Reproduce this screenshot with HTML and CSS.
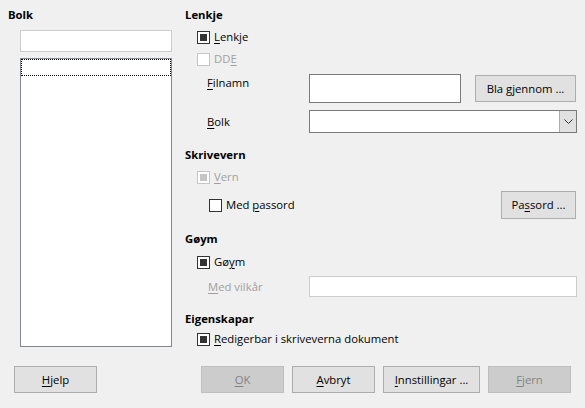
FILE: index.html
```html
<!DOCTYPE html>
<html lang="nn">
<head>
<meta charset="utf-8">
<title>Bolkar</title>
<link rel="stylesheet" href="styles.css">
</head>
<body>
<div class="dialog">
  <div class="main">
    <section class="left">
      <h2 class="heading">Bolk</h2>
      <div class="field field-light name-field"></div>
      <div class="listbox"><div class="focus-row"></div></div>
    </section>
    <section class="right">
      <h2 class="heading">Lenkje</h2>
      <div class="check-row first-row"><span class="cb checked"></span><span class="cb-label"><u>L</u>enkje</span></div>
      <div class="check-row disabled"><span class="cb"></span><span class="cb-label">DD<u>E</u></span></div>
      <div class="form-row file-row">
        <span class="form-label top"><u>F</u>ilnamn</span>
        <div class="field field-dark file-field"></div>
        <div class="btn browse-btn"><span>Bla <u>g</u>jennom ...</span></div>
      </div>
      <div class="form-row bolk-row">
        <span class="form-label"><u>B</u>olk</span>
        <div class="combo">
          <div class="combo-text"></div>
          <div class="combo-btn">
            <svg width="9" height="5" viewBox="0 0 9 5"><polyline points="0.5,0.5 4.5,4.5 8.5,0.5" fill="none" stroke="#333" stroke-width="1"/></svg>
          </div>
        </div>
      </div>

      <h2 class="heading sec-heading">Skrivevern</h2>
      <div class="check-row after-heading disabled"><span class="cb checked"></span><span class="cb-label"><u>V</u>ern</span></div>
      <div class="check-row pass-row">
        <span class="cb"></span><span class="cb-label">Med <u>p</u>assord</span>
        <div class="btn pass-btn"><span>Pa<u>s</u>sord ...</span></div>
      </div>

      <h2 class="heading hide-heading">Gøym</h2>
      <div class="check-row after-heading2"><span class="cb checked"></span><span class="cb-label">Gø<u>y</u>m</span></div>
      <div class="form-row cond-row">
        <span class="form-label disabled-text"><u>M</u>ed vilkår</span>
        <div class="field field-light cond-field"></div>
      </div>

      <h2 class="heading prop-heading">Eigenskapar</h2>
      <div class="check-row last-row"><span class="cb checked"></span><span class="cb-label"><u>R</u>edigerbar i skriveverna dokument</span></div>
    </section>
  </div>
  <div class="buttons">
    <div class="btn w83"><span><u>H</u>jelp</span></div>
    <div class="spacer"></div>
    <div class="btn w83 btn-disabled"><span><u>O</u>K</span></div>
    <div class="btn w83"><span><u>A</u>vbryt</span></div>
    <div class="btn w97"><span><u>I</u>nnstillingar ...</span></div>
    <div class="btn w83 btn-disabled"><span><u>F</u>jern</span></div>
  </div>
</div>
</body>
</html>
```

FILE: styles.css
```css
* { box-sizing: border-box; }
html, body { margin: 0; padding: 0; }
body {
  width: 585px;
  height: 408px;
  background: #f0f0f0;
  font-family: "Open Sans", "Noto Sans", sans-serif;
  font-size: 11.3px;
  line-height: 16px;
  color: #000;
  overflow: hidden;
}
u { text-decoration: underline; text-underline-offset: 2px; }
.dialog { display: flex; flex-direction: column; height: 408px; }
.main { display: flex; gap: 8px; padding: 7px 8px 0 8px; }
.left { width: 169px; display: flex; flex-direction: column; }
.right { width: 392px; display: flex; flex-direction: column; }
.heading { margin: 0; font-size: 11.3px; font-weight: 700; line-height: 16px; height: 16px; }

.field { background: #fff; border: 1px solid #7a7a7a; }
.field-light { border-color: #cccccc; }
.name-field { margin: 7px 0 0 12px; width: 152px; height: 22px; }
.listbox {
  margin: 6px 0 0 12px; width: 152px; height: 289px;
  background: #fff; border: 1px solid #828790; padding: 0;
}
.focus-row { height: 17px; border: 1px dotted #000; }

.check-row { display: flex; align-items: flex-start; height: 22px; padding-left: 12px; }
.check-row .cb { margin-top: 4px; }
.cb {
  width: 13px; height: 13px; border: 1px solid #333; background: #fff;
  display: flex; align-items: center; justify-content: center; flex: none;
}
.cb.checked::after { content: ""; width: 7px; height: 7px; background: #333; }
.cb-label { margin-left: 4px; line-height: 20px; }
.check-row.disabled { color: #a0a0a0; }
.check-row.disabled .cb { border-color: #c5c5c5; }
.check-row.disabled .cb.checked::after { background: #c5c5c5; }
.first-row { margin-top: 4px; }

.form-row { display: flex; padding-left: 22px; }
.form-label { width: 102px; flex: none; }
.form-label.top { align-self: flex-start; padding-top: 1px; }
.file-row { margin-top: 3px; height: 29px; align-items: flex-start; }
.file-field { width: 152px; height: 29px; }
.btn {
  height: 27px; display: flex; align-items: center; justify-content: center;
  background: #e1e1e1; border: 1px solid #adadad; white-space: nowrap; flex: none;
}
.browse-btn { margin: 1px 0 0 14px; width: 101px; }
.bolk-row { margin-top: 7px; height: 23px; align-items: center; }
.combo { display: flex; width: 268px; height: 23px; border: 1px solid #7a7a7a; background: #fff; }
.combo-text { flex: 1; }
.combo-btn {
  width: 17px; background: #e1e1e1; border-left: 1px solid #adadad;
  display: flex; align-items: center; justify-content: center;
}
.combo-btn svg { display: block; }

.sec-heading { margin-top: 14px; }
.after-heading { margin-top: 4px; }
.pass-row { margin-top: 2px; height: 28px; padding-left: 24px; align-items: center; }
.pass-row .cb { margin-top: 0; }
.pass-btn { margin-left: auto; margin-right: 1px; width: 75px; height: 28px; }

.hide-heading { margin-top: 12px; }
.after-heading2 { margin-top: 5px; }
.cond-row { margin-top: 2px; height: 21px; align-items: center; padding-left: 23px; }
.cond-row .form-label { width: 101px; }
.disabled-text { color: #a0a0a0; }
.cond-field { flex: 1; height: 21px; }

.prop-heading { margin-top: 14px; }
.last-row { margin-top: 2px; }

.buttons { display: flex; gap: 8px; margin-top: 15px; padding: 0 14px; }
.spacer { flex: 1; }
.w83 { width: 83px; }
.w97 { width: 97px; }
.btn-disabled { background: #cccccc; border-color: #bfbfbf; color: #838383; }
```
